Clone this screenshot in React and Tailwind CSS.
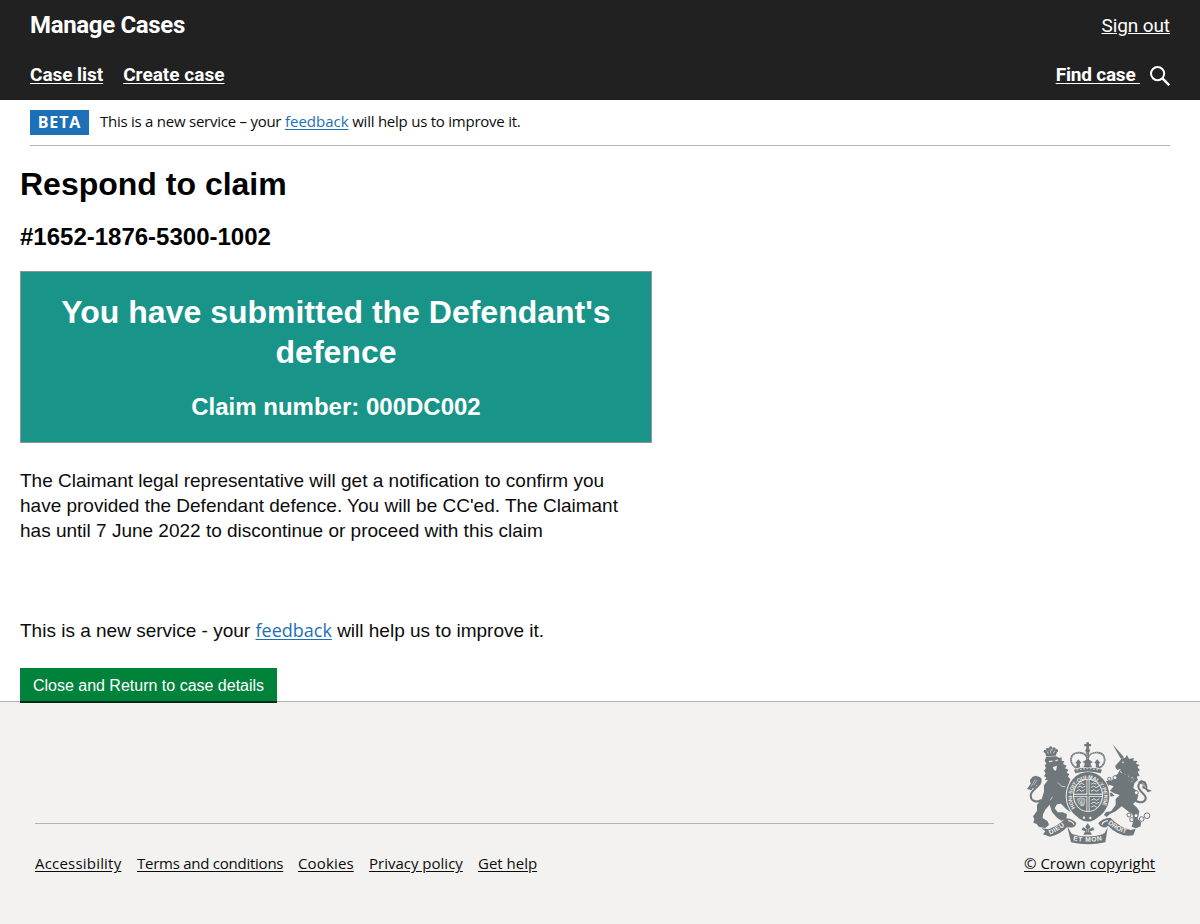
import React from "react";

const footerLinks = [
  { label: "Accessibility", cls: "w-[87px] tracking-[0.2px]" },
  { label: "Terms and conditions", cls: "w-[146px] tracking-[-0.25px]" },
  { label: "Cookies", cls: "w-[56px] tracking-[0.15px]" },
  { label: "Privacy policy", cls: "w-[94px] tracking-[0px]" },
  { label: "Get help", cls: "w-[59px] tracking-[0px]" },
];

function SearchIcon() {
  return (
    <svg className="mt-[2px] h-5 w-5" viewBox="0 0 20 20" fill="none" stroke="#fff">
      <circle cx="7.6" cy="7.6" r="6.6" strokeWidth="2" />
      <path d="M12.2 12.2 L19.2 19.2" strokeWidth="2.5" />
    </svg>
  );
}

function Crest() {
  const ink = "#6f777b";
  const paper = "#f3f2f1";
  return (
    <svg className="h-[105px] w-[130px]" viewBox="30 33 390 315" fill={ink}>
      <defs>
        <path id="garter" d="M181 234 A48 54 0 1 1 257 234" />
        <path id="leftMotto" d="M105 314 Q132 303 157 281" />
        <path id="midMotto" d="M174 331 Q219 340 266 330" />
        <path id="rightMotto" d="M278 280 Q306 305 339 312" />
      </defs>

      {/* lion */}
      <path d="M88 62 L94 79 L122 77 L129 59 L119 66 L116 57 L109 62 L105 55 L100 64Z" />
      <g>
        <circle cx="91" cy="64" r="5" /><circle cx="98" cy="58" r="5" />
        <circle cx="107" cy="54" r="5" /><circle cx="117" cy="57" r="5" />
        <circle cx="124" cy="62" r="5" />
      </g>
      <path d="M97 65 l3 6 M107 61 v9 M118 64 l-3 6" stroke={paper} strokeWidth="2" />
      <path d="M94 80 L124 79 L133 84 L140 82 L140 92 L148 94 L144 102 L155 107 L150 115 L160 119 L155 128 L163 132 L159 140 L166 147 L162 159 L158 177 L163 187 L158 202 L161 217 L173 230 L180 238 L174 247 L162 244 L151 235 L138 221 L126 223 L119 235 L128 247 L143 247 L156 253 L154 267 L139 272 L126 263 L111 246 L104 224 L91 239 L84 253 L83 264 L98 274 L102 285 L91 294 L72 291 L65 282 L55 278 L58 268 L54 259 L66 243 L66 224 L80 208 L87 185 L87 166 L99 150 L90 151 L94 142 L87 139 L92 130 L87 122 L93 114 L89 106 L94 101 L89 91Z" />
      <path d="M102 95 L113 93 M121 93 L129 89" stroke={paper} strokeWidth="3.5" fill="none" />
      <path d="M113 112 L126 107 L123 122 L117 120Z" fill={paper} />
      <path d="M129 158 L140 169 L151 170 M106 211 L112 200" stroke={paper} strokeWidth="2" fill="none" />
      <path d="M80 210 C63 219 48 213 47 198 C46 181 71 172 76 158 C80 145 71 139 61 145" fill="none" stroke={ink} strokeWidth="6" />
      <path d="M79 148 L64 137 L53 140 L45 150 L47 161 L36 177 L49 181 L53 174 L59 176 L64 166 L72 164Z" />
      <path d="M61 148 L48 170 M66 150 L56 166" stroke={paper} strokeWidth="1.5" />

      {/* unicorn */}
      <path d="M292 42 L327 82 L318 87Z" />
      <path d="M320 85 L330 84 L336 75 L342 87 L356 84 L355 92 L367 93 L363 101 L374 105 L367 111 L375 121 L368 125 L374 137 L365 140 L369 149 L358 160 L355 174 L366 184 L370 196 L366 211 L354 222 L365 232 L373 244 L368 267 L378 277 L377 289 L363 295 L350 290 L356 269 L352 253 L337 242 L320 229 L313 235 L302 244 L285 252 L275 261 L267 255 L273 246 L288 244 L302 225 L302 207 L314 195 L296 189 L285 182 L296 169 L282 164 L276 174 L280 188 L290 188 L299 198 L281 200 L273 190 L266 169 L273 153 L291 151 L300 138 L312 128 L317 116 L307 120 L302 114 L301 107 L314 93Z" />
      <path d="M311 127 Q332 143 355 150" stroke={paper} strokeWidth="12" fill="none" />
      <path d="M309 131 L313 121 L319 130 L324 121 L330 134 L337 126 L341 141 L349 132 L350 146 L357 140 L355 155 Q329 151 307 139Z" />
      <circle cx="324" cy="97" r="2.5" fill={paper} />
      <g fill="none" stroke={ink} strokeWidth="3">
        <circle cx="300" cy="143" r="6" fill={paper} /><circle cx="283" cy="147" r="5" fill={paper} />
        <circle cx="364" cy="188" r="6" fill={paper} />
        <circle cx="342" cy="255" r="6" fill={paper} /><circle cx="350" cy="269" r="6" fill={paper} />
        <circle cx="363" cy="257" r="6" fill={paper} /><circle cx="380" cy="267" r="7" fill={paper} />
        <circle cx="396" cy="257" r="8.5" fill={paper} />
      </g>
      <path d="M362 213 C385 223 398 210 389 196 C383 188 367 178 370 166 C373 157 384 153 391 160" fill="none" stroke={ink} strokeWidth="6" />
      <path d="M368 157 L379 150 L392 155 L397 167 L397 177 L411 182 L398 187 L391 178 L382 175 L383 164Z" />
      <path d="M383 158 L393 174 M379 161 L388 169" stroke={paper} strokeWidth="1.5" />

      {/* garter and shield */}
      <ellipse cx="219" cy="198" rx="67" ry="74" fill={paper} />
      <ellipse cx="219" cy="198" rx="64" ry="72" />
      <ellipse cx="219" cy="196" rx="45" ry="50" fill={paper} />
      <ellipse cx="219" cy="196" rx="42" ry="47" />
      <path d="M219 149 V243 M177 196 H261" stroke={paper} strokeWidth="9" />
      <path d="M219 149 V243 M177 196 H261" stroke={ink} strokeWidth="4" />
      <g stroke={paper} strokeWidth="2.6" fill="none">
        <path d="M187 173 l8 -5 l7 5 l9 -5 M184 184 l9 -5 l7 5 l9 -5 M192 164 l8 -4 l8 4" />
        <path d="M228 173 l8 -5 l7 5 l9 -5 M228 184 l9 -5 l7 5 l9 -5 M228 163 l8 -4 l8 4" />
        <path d="M186 207 q12 -6 24 0 l-3 18 q-9 7 -14 -3z M192 207 l8 20 M198 206 l3 21 M204 207 v20" strokeWidth="1.9" />
        <path d="M229 211 l8 -5 l7 5 l9 -5 M228 221 l9 -5 l7 5 l9 -5 M229 231 l8 -4 l8 4" />
      </g>
      <text className="font-['Liberation_Sans'] text-[16px] font-bold" fill={paper}>
        <textPath href="#garter" textLength="220">HONI·SOIT·QUI·MAL·Y·PENSE</textPath>
      </text>
      <path d="M184 251 Q218 280 252 251 L247 263 Q219 286 190 264Z" />
      <circle cx="207" cy="263" r="3.5" fill={paper} /><circle cx="226" cy="264" r="3.5" fill={paper} />

      {/* crown */}
      <path d="M177 119 Q218 106 261 119 L257 130 Q218 119 181 130Z" />
      <path d="M184 114 C160 99 164 70 190 68 C207 67 215 75 218 88 C221 74 233 66 249 68 C274 72 276 100 253 114" fill="none" stroke={ink} strokeWidth="5" />
      <path d="M184 114 C160 99 164 70 190 68 C207 67 215 75 218 88 C221 74 233 66 249 68 C274 72 276 100 253 114" fill="none" stroke={paper} strokeWidth="2" strokeDasharray="2 4" />
      <path d="M214 37 h8 v5 h6 v7 h-6 v7 h-8 v-7 h-6 v-7 h6z" />
      <circle cx="218" cy="62" r="7" />
      <path d="M214 66 h8 v46 h-8z" />
      <path d="M218 68 V88" stroke={paper} strokeWidth="2" strokeDasharray="2.5 3" />
      <path d="M182 115 L186 101 L181 99 L190 88 L199 98 L194 102 L196 112Z M205 111 L210 101 L203 96 L209 92 L218 86 L227 92 L233 96 L226 101 L231 111Z M242 112 L243 101 L238 98 L247 88 L256 99 L251 101 L254 115Z" />
      <path d="M185 121 Q219 111 253 121" fill="none" stroke={paper} strokeWidth="3" strokeDasharray="5 5" />

      {/* fleur and motto ribbon */}
      <path d="M218 280 L226 290 L223 298 L234 291 L238 300 L225 304 L231 314 H205 L211 304 L200 300 L204 291 L214 298 L211 290Z" />
      <path d="M215 295 v12 M221 295 v12" stroke={paper} strokeWidth="1.5" />
      <path d="M79 294 L100 298 Q130 286 151 266 Q168 262 184 279 Q181 296 161 292 L171 312 Q219 327 265 312 L277 292 Q255 294 250 279 Q263 264 286 263 Q315 293 347 300 L362 296 L355 316 Q314 323 279 287 L271 337 Q219 349 168 337 L157 290 Q138 312 105 320 L84 313 L91 304Z" />
      <path d="M160 272 Q174 275 177 284 M260 284 Q266 273 279 272 M161 292 L171 309 M278 289 L267 309" fill="none" stroke={paper} strokeWidth="3.5" />
      <g className="font-['Liberation_Sans'] text-[20px] font-bold" fill={paper}>
        <text><textPath href="#leftMotto" textLength="52">DIEU</textPath></text>
        <text><textPath href="#midMotto" textLength="88">ET MON</textPath></text>
        <text><textPath href="#rightMotto" textLength="63">DROIT</textPath></text>
      </g>
    </svg>
  );
}

export default function App() {
  return (
    <div className="flex h-[924px] w-[1200px] flex-col overflow-hidden bg-white font-['Liberation_Sans',sans-serif] text-[#0b0c0c]">
      <header className="flex h-[100px] shrink-0 flex-col bg-[#212121] px-[30px] font-['Roboto',sans-serif] text-white">
        <div className="flex h-[50px] items-center justify-between">
          <span className="whitespace-nowrap text-[24px] font-bold leading-[50px] tracking-[-0.33px]">Manage Cases</span>
          <a className="whitespace-nowrap pt-[2px] text-[19px] leading-[50px] tracking-[-0.1px] underline underline-offset-1">Sign out</a>
        </div>
        <nav className="flex h-[50px] items-center text-[19px] font-bold leading-[50px]">
          <a className="mr-5 whitespace-nowrap tracking-[-0.05px] underline underline-offset-2">Case list</a>
          <a className="whitespace-nowrap tracking-[0.02px] underline underline-offset-2">Create case</a>
          <a className="ml-auto mr-[10px] whitespace-pre tracking-[-0.2px] underline underline-offset-2">{"Find case "}</a>
          <SearchIcon />
        </nav>
      </header>

      <div className="mx-[30px] flex h-[46px] shrink-0 items-start border-b border-[#b1b4b6] pt-[10px] font-['Open_Sans',sans-serif]">
        <strong className="mr-[11px] h-[25px] w-[59px] bg-[#1d70b8] text-center text-[16px] leading-[25px] tracking-[0.9px] text-white">BETA</strong>
        <span className="whitespace-nowrap text-[15px] leading-[23px]">
          <span className="tracking-[-0.25px]">This is a new service – your </span>
          <a className="text-[#1d70b8] underline underline-offset-2">feedback</a>
          <span className="tracking-[-0.24px]"> will help us to improve it.</span>
        </span>
      </div>

      <main className="flex h-[555px] shrink-0 flex-col items-start px-5">
        <h1 className="mt-[18px] whitespace-nowrap text-[32px] font-bold leading-[40px] text-black">Respond to claim</h1>
        <h2 className="mt-[18px] whitespace-nowrap text-[24px] font-bold leading-[30px] text-black">#1652-1876-5300-1002</h2>
        <section className="mt-[19px] h-[172px] w-[632px] border border-[#8c9594] bg-[#199489] pt-[20px] text-center font-bold text-white">
          <div className="text-[32px] leading-[40px]">
            <p className="whitespace-nowrap">You have submitted the Defendant's</p>
            <p>defence</p>
          </div>
          <p className="mt-[20px] text-[24px] leading-[30px]">Claim number: 000DC002</p>
        </section>
        <div className="mt-[25px] whitespace-nowrap text-[19px] leading-[25px]">
          <p>The Claimant legal representative will get a notification to confirm you</p>
          <p>have provided the Defendant defence. You will be CC'ed. The Claimant</p>
          <p>has until 7 June 2022 to discontinue or proceed with this claim</p>
        </div>
        <p className="mt-[75px] whitespace-nowrap text-[19px] leading-[25px]">
          This is a new service - your <a className="font-['Open_Sans'] text-[18px] text-[#1d70b8] underline underline-offset-2">feedback</a> will help us to improve it.
        </p>
        <button className="relative z-10 mt-[25px] h-[33px] w-[257px] shrink-0 whitespace-nowrap bg-[#00823b] pt-[3px] text-[16px] leading-[30px] text-white shadow-[0_2px_0_#002d18]">
          Close and Return to case details
        </button>
      </main>

      <footer className="flex flex-1 items-start border-t border-[#b1b4b6] bg-[#f3f2f1] pl-[35px] font-['Open_Sans',sans-serif]">
        <div className="w-[959px] pt-[121px]">
          <hr className="border-[#b1b4b6]" />
          <ul className="mt-[27px] flex gap-[15px] text-[15px] leading-[24px]">
            {footerLinks.map((l) => (
              <li key={l.label} className={l.cls}>
                <a className="whitespace-nowrap underline underline-offset-2">{l.label}</a>
              </li>
            ))}
          </ul>
        </div>
        <div className="ml-[30px] flex w-[131px] flex-col items-start pt-[39px]">
          <div className="ml-px"><Crest /></div>
          <a className="mt-[5px] whitespace-nowrap text-[15px] leading-[24px] underline underline-offset-2">© Crown copyright</a>
        </div>
      </footer>
    </div>
  );
}
